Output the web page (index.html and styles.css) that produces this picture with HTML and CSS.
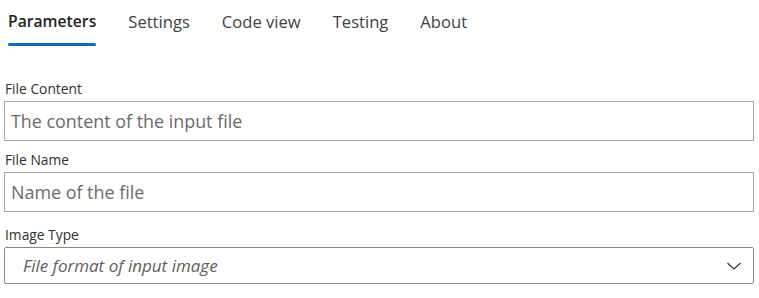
FILE: index.html
```html
<!DOCTYPE html>
<html>
<head>
<meta charset="utf-8">
<link rel="stylesheet" href="styles.css">
</head>
<body>
<div class="page">
  <nav class="tabs">
    <div class="tab active">Parameters</div>
    <div class="tab">Settings</div>
    <div class="tab">Code view</div>
    <div class="tab">Testing</div>
    <div class="tab">About</div>
  </nav>
  <div class="form">
    <div class="field">
      <label class="label">File Content</label>
      <div class="input"><span class="placeholder">The content of the input file</span></div>
    </div>
    <div class="field">
      <label class="label">File Name</label>
      <div class="input"><span class="placeholder">Name of the file</span></div>
    </div>
    <div class="field field-dd">
      <label class="label">Image Type</label>
      <div class="dropdown">
        <span class="dd-placeholder">File format of input image</span>
        <svg class="chevron" width="16" height="10" viewBox="0 0 16 10"><path d="M1.5 2 L8 8 L14.5 2" fill="none" stroke="#323130" stroke-width="1.2"/></svg>
      </div>
    </div>
  </div>
</div>
</body>
</html>
```

FILE: styles.css
```css
html, body {
  margin: 0;
  padding: 0;
  background: #ffffff;
}
body {
  font-family: "Segoe UI", "Open Sans", "Noto Sans", sans-serif;
  color: #323130;
}
.page {
  padding: 0 5px 0 4px;
}
.tabs {
  display: flex;
  gap: 32px;
  padding-left: 4px;
  height: 47px;
}
.tab {
  position: relative;
  font-size: 16.6px;
  line-height: 43px;
  color: #424242;
}
.tab.active {
  font-size: 15.7px;
  font-weight: 600;
  color: #242424;
}
.tab.active::after {
  content: "";
  position: absolute;
  left: 0;
  right: 0;
  top: 43px;
  height: 3px;
  border-radius: 2px;
  background: #0f6cbd;
}
.form {
  display: flex;
  flex-direction: column;
  gap: 10px;
  padding-top: 33px;
}
.field {
  display: flex;
  flex-direction: column;
  gap: 3px;
}
.field-dd {
  margin-top: 4px;
}
.label {
  font-size: 13.8px;
  line-height: 18px;
  color: #323130;
  padding-left: 1px;
}
.input {
  height: 38px;
  border: 1px solid #a6a6a6;
  display: flex;
  align-items: center;
  padding-left: 6px;
}
.placeholder {
  font-size: 17.9px;
  color: #6b6b6b;
}
.dropdown {
  height: 35px;
  border: 1px solid #8a8886;
  border-radius: 2px;
  display: flex;
  align-items: center;
  justify-content: space-between;
  padding: 0 11px 0 18px;
}
.dd-placeholder {
  font-size: 17px;
  font-style: italic;
  color: #605e5c;
}
.chevron {
  display: block;
}
```
